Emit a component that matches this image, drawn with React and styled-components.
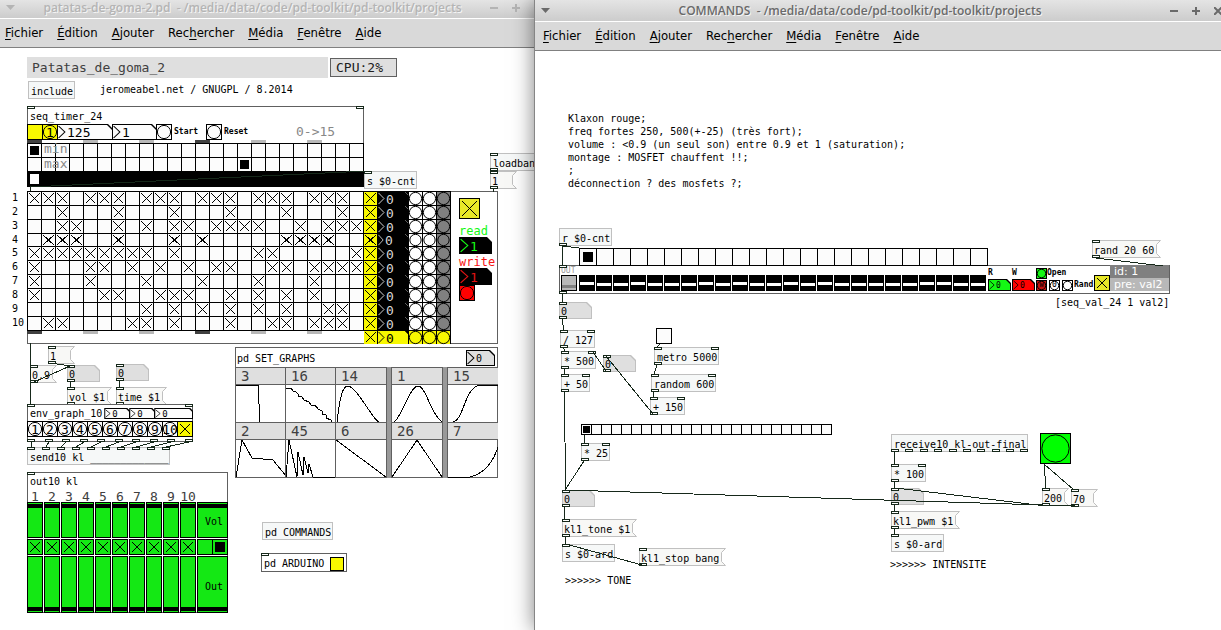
import React from 'react';
import styled, { createGlobalStyle } from 'styled-components'

const GlobalStyle = createGlobalStyle`
* { box-sizing: border-box; }
body {
    margin: 0;
    background: #ffffff;
    font-family: "DejaVu Sans Mono", monospace;
    font-size: 10px;
    line-height: 13px;
    color: #000000;
}
button, input {
    margin: 0;
    padding: 0;
    border: 0;
    border-radius: 0;
    font: inherit;
    color: inherit;
}
`

const Desktop = styled.main`
display: grid;
grid-template-columns: 534fr 687fr;
min-height: 100vh;
overflow: hidden;
`

const Window = styled.section`
position: relative;
min-width: 0;
background: #ffffff;
overflow: ${p => p.$front ? 'visible' : 'hidden'};
border-left: ${p => p.$front ? '1px solid #858585' : '0'};
box-shadow: ${p => p.$front ? '0 0 20px rgba(0, 0, 0, 0.5)' : 'none'};
`

const TitleBar = styled.header`
display: flex;
align-items: center;
height: ${p => p.$front ? 22 : 19}px;
padding-bottom: ${p => p.$front ? 0 : 3}px;
margin-right: ${p => p.$front ? 0 : -15}px;
background: linear-gradient(#e4e4e4, #cccccc);
border-bottom: 1px solid #ffffff;
color: ${p => p.$front ? '#6a6a6a' : '#b4b4b4'};
overflow: hidden;

h1 {
    flex: 1;
    margin: 0;
    text-align: center;
    white-space: pre;
    font: 600 12px/16px "Open Sans", sans-serif;
    text-shadow: 1px 1px 0 #f4f4f4;
}
`

const TitleButton = styled.button`
flex: 0 0 22px;
height: 16px;
background: none;

svg {
    display: block;
    margin: 0 auto;
}
`

const TitleButtons = styled.div`
display: flex;
margin-right: ${p => p.$front ? -8 : 0}px;
`

const MenuBar = styled.nav`
display: flex;
align-items: center;
gap: 14px;
height: 29px;
padding: 0 ${p => p.$front ? 8 : 5}px;
background: #d9d9d9;
border-bottom: 1px solid #808080;

a {
    color: #000000;
    text-decoration: none;
    font: 13px/20px "DejaVu Sans Condensed", "DejaVu Sans", sans-serif;
}

u {
    text-underline-offset: 2px;
}
`

const Node = styled.div`
position: absolute;
left: ${p => p.$x}px;
top: ${p => p.$y}px;
white-space: pre;
`

const Box = styled(Node)`
height: 18px;
padding: 4px 2px 0 3px;
background: #f6f8f8;
box-shadow: inset 0 0 0 1px #c0c0c0;
`

const MessageBox = styled(Node)`
display: flex;
height: 18px;
min-width: 27px;

button {
    flex: 1;
    height: 18px;
    padding: 3px 1px 0;
    text-align: left;
    white-space: pre;
    background: #f8f8f6;
    border: 1px solid #c0c0c0;
    border-right: 0;
}
`

const Comment = styled(Node)`
margin: 0;
font-family: inherit;
`

const Ports = styled.span`
position: absolute;
left: 0;
right: 0;
${p => p.$side}: 0;
display: flex;
justify-content: space-between;
pointer-events: none;

i {
    width: 8px;
    height: 3px;
    background: #ffffff;
    border: 1px solid #16281a;
}
`

const Cords = styled.svg`
position: absolute;
inset: 0;
width: 100%;
height: 100%;
pointer-events: none;
shape-rendering: crispEdges;
stroke: #16281a;
fill: none;
`

const Panel = styled(Node)`
width: ${p => p.$w}px;
background: #ffffff;
box-shadow: inset 0 0 0 1px #606060;
`

const PanelTitle = styled.div`
display: flex;
align-items: center;
height: ${p => p.$h}px;
padding: 2px ${p => p.$end || 0}px 0 ${p => p.$start || 3}px;
`

const Banner = styled(Node)`
width: 301px;
height: 21px;
padding-left: 5px;
background: #dfdfdf;
color: #404040;
font-size: 13px;
line-height: 21px;
`

const Cpu = styled(Node)`
width: 67px;
height: 19px;
padding-left: 5px;
background: #dfdfdf;
border: 1px solid #606060;
color: #202020;
font-size: 13px;
line-height: 18px;
`

const BigLabel = styled.span`
font-size: 13px;
line-height: 14px;
color: ${p => p.$color || '#888888'};
`

const Tiny = styled.span`
font-size: 8px;
font-weight: bold;
line-height: 10px;
`

const Row = styled.div`
display: flex;
align-items: center;
height: ${p => p.$h}px;
`

const Joined = styled.div`
display: flex;
margin-left: ${p => p.$left || 0}px;

& > * + * {
    margin-left: -1px;
}
`

const ToggleBox = styled.label`
display: grid;
grid-template: 100% / 100%;
flex: none;
width: ${p => p.$size}px;
height: ${p => p.$size ? p.$size + 'px' : '100%'};
background: ${p => p.$bg || '#fcfcfc'};
border: ${p => p.$plain ? '0' : '1px solid #000000'};

input, svg {
    grid-area: 1 / 1;
    width: 100%;
    height: 100%;
    min-height: 0;
    appearance: none;
}

svg {
    display: none;
    pointer-events: none;
    stroke: #000000;
    shape-rendering: crispEdges;
}

path {
    vector-effect: non-scaling-stroke;
}

input:checked + svg {
    display: block;
}
`

const BangButton = styled.button`
display: grid;
grid-template: 100% / 100%;
flex: none;
width: ${p => p.$size}px;
height: ${p => p.$size ? p.$size + 'px' : '100%'};
background: ${p => p.$bg || '#fcfcfc'};
border: ${p => p.$plain ? '0' : '1px solid #000000'};
color: ${p => p.$ink || '#000000'};
font-size: ${p => p.$font || 13}px;
line-height: 1;
place-items: center;

svg, span {
    grid-area: 1 / 1;
}

svg {
    width: 100%;
    height: 100%;
    min-height: 0;
    overflow: visible;
}

circle {
    vector-effect: non-scaling-stroke;
}

span {
    width: 0;
    display: flex;
    justify-content: center;
}
`

const NumberFrame = styled.span`
display: block;
flex: none;
width: ${p => p.$w}px;
height: ${p => p.$h}px;
padding: ${p => p.$plain ? 0 : 1}px;
background: ${p => p.$line};
clip-path: polygon(0 0, calc(100% - ${p => p.$cut}px) 0, 100% ${p => p.$cut}px, 100% 100%, 0 100%);
`

const NumberFace = styled.label`
display: flex;
align-items: center;
height: 100%;
background: ${p => p.$bg};
color: ${p => p.$ink};
clip-path: polygon(0 0, calc(100% - ${p => p.$cut}px) 0, 100% ${p => p.$cut}px, 100% 100%, 0 100%);

svg {
    flex: none;
    height: 100%;
    stroke: currentColor;
    fill: none;
}

input {
    width: 100%;
    min-width: 0;
    height: 100%;
    padding: 1px 0 0 1px;
    background: transparent;
    font-size: ${p => p.$font}px;
}
`

const RadioStrip = styled.div`
display: grid;
grid-template-columns: repeat(${p => p.$count}, ${p => p.$cell}px);
gap: 1px;
width: max-content;
padding: 1px;
background: #000000;

& + & {
    margin-top: -1px;
}

input {
    appearance: none;
    height: ${p => p.$high || p.$cell}px;
    background: ${p => p.$bg || '#fcfcfc'};
}

input:checked {
    background: ${p => p.$mark || '#000000'};
    box-shadow: inset 0 0 0 ${p => p.$inset}px ${p => p.$bg || '#fcfcfc'};
}
`

const RangeFrame = styled.label`
position: relative;
display: block;
height: ${p => p.$h}px;
padding: 1px;
background: ${p => p.$bg};
border: 1px solid #000000;

input {
    display: block;
    appearance: none;
    writing-mode: vertical-lr;
    direction: rtl;
    width: 100%;
    height: 100%;
    background: transparent;
}

input::-webkit-slider-thumb {
    appearance: none;
    width: ${p => p.$thumbWidth}px;
    height: ${p => p.$thumbHeight}px;
    background: ${p => p.$thumb};
}

span {
    position: absolute;
    right: 4px;
    top: 50%;
    margin-top: -3px;
    line-height: 10px;
}
`

const MarkRow = styled.div`
display: grid;
grid-template-columns: repeat(6, 15px);
column-gap: 41px;
height: 3px;

i { background: #b8b8b8; }
i:nth-child(3n + 1) { background: #404040; }
`

const Over = styled.span`
position: absolute;
left: 17px;
top: ${p => p.$top}px;
line-height: 14px;
pointer-events: none;
`

const RowNumbers = styled(Node)`
display: grid;
grid-template-rows: repeat(3, 14px) 13px repeat(6, 14px);
line-height: 14px;
`

const SeqBody = styled.div`
display: flex;
height: 153px;
`

const Matrix = styled.div`
display: grid;
grid-template-columns: repeat(24, 13px);
grid-template-rows: repeat(3, 13px) 12px repeat(6, 13px);
gap: 1px;
padding: 1px;
background: #000000;
`

const TrackControls = styled.div`
display: grid;
grid-template-columns: 13px 30px repeat(3, 13px);
grid-template-rows: repeat(3, 13px) 12px repeat(7, 13px);
gap: 1px;
padding: 1px 1px 1px 0;
background: #000000;
`

const MemoryColumn = styled.div`
display: flex;
flex-direction: column;
align-items: flex-start;
padding: 7px 0 0 8px;
`

const MemoryLabel = styled.span`
height: 12px;
margin-top: ${p => p.$top}px;
color: ${p => p.$color};
font-size: 12px;
line-height: 12px;
`

const GraphGrid = styled.div`
display: grid;
grid-template-columns: 50px 50px 51px 5px 51px 5px 51px;
grid-template-rows: 55px 56px;
`

const GraphCell = styled.figure`
margin: 0;
border-left: 1px solid #606060;
border-top: 1px solid #606060;

figcaption {
    height: 17px;
    padding-left: 5px;
    background: #dfdfdf;
    border-bottom: 1px solid #606060;
    color: #404040;
    font-size: 14px;
    line-height: 17px;
}

svg {
    display: block;
    width: 100%;
    height: 37px;
    overflow: visible;
    fill: none;
    stroke: #000000;
    shape-rendering: crispEdges;
}
`

const GraphBar = styled.i`
background: #999999;
border-left: 1px solid #606060;
`

const MixerNumbers = styled.div`
display: grid;
grid-template-columns: repeat(10, 17px);
height: 13px;
color: #404040;
font-size: 13px;
line-height: 15px;

span {
    display: flex;
    justify-content: center;
    width: 16px;
}
`

const MixerGrid = styled.div`
display: grid;
grid-template-columns: repeat(10, 16px) 31px;
gap: 1px;
`

const ValuePanel = styled(Panel)`
display: flex;
align-items: flex-end;
height: 29px;
padding: 0 1px 3px 2px;
`

const Stack = styled.div`
display: flex;
flex: none;
flex-direction: column;
justify-content: space-between;
width: ${p => p.$w}px;
height: ${p => p.$h}px;
margin-right: ${p => p.$gap || 0}px;
margin-left: ${p => p.$left || 0}px;
`

const ValueSliders = styled.div`
display: grid;
grid-template-columns: repeat(24, 16px);
gap: 1px;
margin-right: 2px;
`

const Tag = styled.span`
padding-left: 4px;
height: 13px;
background: ${p => p.$bg};
color: #ffffff;
font: 11px/13px "DejaVu Sans", sans-serif;
`

const OutLabel = styled.span`
color: #999999;
font-size: 8px;
line-height: 8px;
`

const GREEN = '#14e814'
const YELLOW = '#f8f800'

const TRACKS = [
    [0, 1, 2, 4, 5, 6, 8, 9, 10, 12, 13, 14, 16, 17, 18, 20, 21, 22],
    [2, 6, 10, 14, 18, 22],
    [2, 3, 6, 8, 10, 11, 13, 14, 15, 16, 19, 21, 22, 23],
    [1, 2, 3, 6, 10, 12, 18, 19, 20, 21],
    [0, 1, 2, 3, 4, 5, 6, 7, 8, 10, 16, 17, 23],
    [0, 4, 5, 7, 9, 11, 13, 14, 17, 18, 20, 21, 22, 23],
    [0, 4, 8, 12, 16, 20],
    [0, 5, 6, 9, 10, 11, 14, 16, 18, 20],
    [8, 10, 12, 14, 16, 18, 21, 22],
    [1, 2, 7, 8, 10, 14, 17, 18, 20, 21, 22],
]

const GRAPHS = [
    [3, 'M0 0H22L24 37'],
    [16, 'M0 3H5L7 6L10 7L12 9V11L16 12L18 15L23 17L25 20H29L32 24L36 26V29L40 30V33L45 35V37'],
    [14, 'M1 37C4 10 7 1 12 1C16 1 20 7 24 12L37 31Q41 36 43 37H50'],
    null,
    [1, 'M2 37C10 32 18 1 26 1C34 1 39 30 50 37'],
    null,
    [15, 'M5 37C16 35 16 3 32 0H50'],
    [2, 'M0 37L6 0L16 18L37 20L50 36'],
    [45, 'M0 37L3 0L11 37L12 12L17 35L18 17L22 33L23 24L27 37H50'],
    [6, 'M0 0L50 37'],
    null,
    [26, 'M0 37L25 0L50 37'],
    null,
    [7, 'M0 37H22Q42 32 50 7'],
]

const LEVELS = [47, 38, 29, 47, 38, 38, 38, 47, 29, 47, 29, 38, 47, 38, 47, 29, 29, 29, 38, 29, 47, 47, 29, 29]

const range = n => Array.from({ length: n }, (_, i) => i)

function PortRow({ side, count }) {
    if (!count) return null
    return <Ports $side={side}>{range(count).map(i => <i key={i} />)}</Ports>
}

function Obj({ x, y, ins = 0, outs = 0, children }) {
    return (
        <Box $x={x} $y={y}>
            {children}
            <PortRow side="top" count={ins} />
            <PortRow side="bottom" count={outs} />
        </Box>
    )
}

function Message({ x, y, children }) {
    return (
        <MessageBox $x={x} $y={y}>
            <button>{children}</button>
            <svg width="6" height="18" fill="#f8f8f6" stroke="#c0c0c0">
                <path d="M0 0.5H5.5L1.5 4.5V13.5L5.5 17.5H0" />
            </svg>
            <PortRow side="top" count={1} />
            <PortRow side="bottom" count={1} />
        </MessageBox>
    )
}

function NumBox({ label, value = '0', w, h, bg = '#fcfcfc', ink = '#000000', line = '#000000', font = 13, cut = 5, plain, arrow = true }) {
    return (
        <NumberFrame $w={w} $h={h} $line={line} $cut={cut} $plain={plain}>
            <NumberFace $bg={bg} $ink={ink} $font={font} $cut={cut}>
                {arrow && (
                    <svg width={Math.round(h / 2)} viewBox="0 0 7 14" preserveAspectRatio="none">
                        <path d="M0.5 1L6 7L0.5 13" />
                    </svg>
                )}
                <input aria-label={label} defaultValue={value} />
            </NumberFace>
        </NumberFrame>
    )
}

function Atom({ x, y }) {
    return (
        <Node $x={x} $y={y}>
            <NumBox label="number" w={33} h={17} bg="#dfdfdf" line="#c0c0c0" font={10} arrow={false} />
            <PortRow side="top" count={1} />
            <PortRow side="bottom" count={1} />
        </Node>
    )
}

function Toggle({ label, size, bg, on = true, plain }) {
    return (
        <ToggleBox $size={size} $bg={bg} $plain={plain}>
            <input type="checkbox" aria-label={label} defaultChecked={on} />
            <svg viewBox="0 0 13 13" preserveAspectRatio="none"><path d="M1.5 1.5L11.5 11.5M11.5 1.5L1.5 11.5" /></svg>
        </ToggleBox>
    )
}

function Bang({ label, text, size, bg, fill = 'none', ring = '#000000', plain, ink, font }) {
    return (
        <BangButton aria-label={label} $size={size} $bg={bg} $plain={plain} $ink={ink} $font={font}>
            <svg viewBox="0 0 14 14"><circle cx="7" cy="7" r="6.6" fill={fill} stroke={ring} /></svg>
            {text && <span>{text}</span>}
        </BangButton>
    )
}

function Radio({ name, count, cell, high, value = 0, inset, bg, mark }) {
    return (
        <RadioStrip role="radiogroup" aria-label={name} $count={count} $cell={cell} $high={high} $inset={inset} $bg={bg} $mark={mark}>
            {range(count).map(i => (
                <input key={i} type="radio" name={name} aria-label={`${name} ${i}`} defaultChecked={i === value} />
            ))}
        </RadioStrip>
    )
}

function Slider({ label, text, value, h, bg = GREEN, thumb = '#000000', thumbWidth = 14, thumbHeight = 4 }) {
    return (
        <RangeFrame $h={h} $bg={bg} $thumb={thumb} $thumbWidth={thumbWidth} $thumbHeight={thumbHeight}>
            <input type="range" aria-label={label} defaultValue={value} />
            {text && <span>{text}</span>}
        </RangeFrame>
    )
}

function Marks() {
    return <MarkRow>{range(6).map(i => <i key={i} />)}</MarkRow>
}

function WindowChrome({ title, front }) {
    return (
        <>
            <TitleBar $front={front}>
                <TitleButton aria-label="Menu">
                    <svg width="10" height="6" fill="currentColor"><path d="M0 0H9L4.5 5Z" /></svg>
                </TitleButton>
                <h1>{title}</h1>
                <TitleButtons $front={front}>
                    <TitleButton aria-label="Minimize">
                        <svg width="8" height="8" stroke="currentColor" strokeWidth="2"><path d="M0 4H8" /></svg>
                    </TitleButton>
                    <TitleButton aria-label="Maximize">
                        <svg width="8" height="8" stroke="currentColor" strokeWidth="2"><path d="M0 4H8M4 0V8" /></svg>
                    </TitleButton>
                    <TitleButton aria-label="Close">
                        <svg width="8" height="8" stroke="currentColor" strokeWidth="2"><path d="M0 0L8 8M8 0L0 8" /></svg>
                    </TitleButton>
                </TitleButtons>
            </TitleBar>
            <MenuBar $front={front}>
                <a href="#fichier"><u>F</u>ichier</a>
                <a href="#edition"><u>É</u>dition</a>
                <a href="#ajouter"><u>A</u>jouter</a>
                <a href="#rechercher">Rec<u>h</u>ercher</a>
                <a href="#media"><u>M</u>édia</a>
                <a href="#fenetre"><u>F</u>enêtre</a>
                <a href="#aide"><u>A</u>ide</a>
            </MenuBar>
        </>
    )
}

function SeqTimer() {
    return (
        <Panel $x={27} $y={106} $w={337}>
            <PanelTitle $h={18}>seq_timer_24</PanelTitle>
            <Row $h={16}>
                <Joined>
                    <Toggle label="run" size={16} bg={YELLOW} on={false} />
                    <Bang label="step" text="1" size={16} bg={YELLOW} />
                    <NumBox label="tempo" value="125" w={56} h={16} />
                    <NumBox label="division" value="1" w={45} h={16} />
                    <Bang label="Start" size={16} />
                </Joined>
                <Stack $w={32} $h={10} $left={2}><Tiny>Start</Tiny></Stack>
                <Bang label="Reset" size={16} />
                <Stack $w={72} $h={10} $left={2}><Tiny>Reset</Tiny></Stack>
                <BigLabel>0-&gt;15</BigLabel>
            </Row>
            <Marks />
            <Radio name="min" count={24} cell={13} inset={2} />
            <Radio name="max" count={24} cell={13} inset={2} value={15} />
            <Radio name="position" count={24} cell={13} high={14} inset={2} bg="#000000" mark="#ffffff" />
            <Over $top={36}><BigLabel>min</BigLabel></Over>
            <Over $top={51}><BigLabel>max</BigLabel></Over>
            <PortRow side="top" count={2} />
        </Panel>
    )
}

function Sequencer() {
    return (
        <Panel $x={27} $y={191} $w={471}>
            <SeqBody>
                <div>
                    <Matrix>
                        {TRACKS.map((steps, r) => range(24).map(c => (
                            <Toggle key={`${r}-${c}`} label={`track ${r + 1} step ${c + 1}`} on={steps.includes(c)} plain />
                        )))}
                    </Matrix>
                    <Marks />
                </div>
                <TrackControls>
                    {range(11).map(r => (
                        <React.Fragment key={r}>
                            <Toggle label={`track ${r + 1}`} bg={YELLOW} plain />
                            <NumBox label={`value ${r + 1}`} w={30} h={r === 3 ? 12 : 13} plain
                                bg={r === 10 ? YELLOW : '#000000'} ink={r === 10 ? '#000000' : '#d8d8d8'} line={r === 10 ? '#000000' : '#ffffff'} cut={3} />
                            {['#ffffff', '#ffffff', '#808080'].map((fill, i) => (
                                <Bang key={i} label={`bang ${r + 1}.${i + 1}`} bg={r === 10 ? YELLOW : fill} fill={r === 10 ? YELLOW : fill} plain />
                            ))}
                        </React.Fragment>
                    ))}
                </TrackControls>
                <MemoryColumn>
                    <Toggle label="memory" size={21} bg="#e8e828" />
                    <MemoryLabel $color="#14f814" $top={6}>read</MemoryLabel>
                    <NumBox label="read" value="1" w={33} h={17} bg="#000000" ink="#14f814" />
                    <MemoryLabel $color="#f81414" $top={2}>write</MemoryLabel>
                    <NumBox label="write" value="1" w={33} h={17} bg="#000000" ink="#e01414" />
                    <Bang label="write memory" size={16} bg="#ff0000" fill="#ff0000" />
                </MemoryColumn>
            </SeqBody>
        </Panel>
    )
}

function EnvGraph() {
    return (
        <Panel $x={27} $y={404} $w={166}>
            <PanelTitle $h={17}>
                env_graph_10
                <Joined $left={2}>
                    <NumBox label="graph" w={26} h={11} font={9} cut={3} />
                    <NumBox label="attack" w={26} h={11} font={9} cut={3} />
                    <NumBox label="length" w={39} h={11} font={9} cut={3} />
                </Joined>
            </PanelTitle>
            <Joined>
                {range(10).map(i => <Bang key={i} label={`envelope ${i + 1}`} text={String(i + 1)} size={16} />)}
                <Toggle label="envelope" size={16} bg={YELLOW} />
            </Joined>
            <Row $h={5} />
            <PortRow side="top" count={2} />
            <PortRow side="bottom" count={10} />
        </Panel>
    )
}

function SetGraphs() {
    return (
        <Panel $x={235} $y={347} $w={263}>
            <PanelTitle $h={20} $start={2} $end={3}>
                <Stack $w={229} $h={13}>pd SET_GRAPHS</Stack>
                <NumBox label="graph set" w={29} h={16} bg="#dfdfdf" font={10} />
            </PanelTitle>
            <GraphGrid>
                {GRAPHS.map((g, i) => g
                    ? <GraphCell key={i}><figcaption>{g[0]}</figcaption><svg><path d={g[1]} /></svg></GraphCell>
                    : <GraphBar key={i} />)}
            </GraphGrid>
        </Panel>
    )
}

function Mixer() {
    return (
        <Panel $x={27} $y={472} $w={201}>
            <PanelTitle $h={17}>out10 kl</PanelTitle>
            <MixerNumbers>{range(10).map(i => <span key={i}>{i + 1}</span>)}</MixerNumbers>
            <MixerGrid>
                {range(10).map(i => <Slider key={i} label={`Vol ${i + 1}`} value={100} h={36} />)}
                <Slider label="Vol" text="Vol" value={100} h={36} thumbWidth={29} />
                {range(10).map(i => <Toggle key={i} label={`mute ${i + 1}`} size={16} bg={GREEN} />)}
                <Radio name="mode" count={2} cell={14} value={1} inset={2} bg={GREEN} />
                {range(10).map(i => <Slider key={i} label={`Out ${i + 1}`} value={0} h={57} />)}
                <Slider label="Out" text="Out" value={0} h={57} thumbWidth={29} />
            </MixerGrid>
            <PortRow side="top" count={1} />
        </Panel>
    )
}

function SeqValues() {
    return (
        <ValuePanel $x={24} $y={265} $w={611}>
            <Stack $w={16} $h={24} $gap={2}>
                <OutLabel>OUT</OutLabel>
                <Slider label="OUT" value={10} h={16} bg="#b8b8b8" thumb="#808080" thumbHeight={3} />
            </Stack>
            <ValueSliders>
                {LEVELS.map((v, i) => <Slider key={i} label={`value ${i + 1}`} value={v} h={16} bg="#000000" thumb="#ffffff" thumbHeight={3} />)}
            </ValueSliders>
            <Stack $w={23} $h={23} $gap={1}><Tiny>R</Tiny><NumBox label="R" w={23} h={12} bg="#14f814" font={8} cut={4} /></Stack>
            <Stack $w={23} $h={23} $gap={1}><Tiny>W</Tiny><NumBox label="W" w={23} h={12} bg="#ff0000" font={8} cut={4} /></Stack>
            <Stack $w={58} $h={24}>
                <Row $h={12}><Bang label="Open" size={11} bg="#14f814" fill="#14f814" /><Tiny>Open</Tiny></Row>
                <Row $h={12}>
                    <Bang label="W" text="W" size={11} bg="#c01010" fill="#c01010" font={7} />
                    <Stack $w={2} $h={1} />
                    <Bang label="0" text="0" size={11} bg="#ffffff" fill="#ffffff" font={8} />
                    <Stack $w={2} $h={1} />
                    <Bang label="Rand" size={11} bg="#ffffff" fill="#ffffff" />
                    <Stack $w={1} $h={1} />
                    <Tiny>Rand</Tiny>
                </Row>
            </Stack>
            <Toggle label="random" size={16} bg="#e8e828" />
            <Stack $w={59} $h={26}><Tag $bg="#808080">id: 1</Tag><Tag $bg="#b8b8b8">pre: val2</Tag></Stack>
            <PortRow side="top" count={1} />
            <PortRow side="bottom" count={1} />
        </ValuePanel>
    )
}

function PatatasWindow() {
    return (
        <Window>
            <WindowChrome title="patatas-de-goma-2.pd  - /media/data/code/pd-toolkit/pd-toolkit/projects" />
            <Banner $x={27} $y={57}>Patatas_de_goma_2</Banner>
            <Cpu $x={330} $y={58}>CPU:2%</Cpu>
            <Obj x={28} y={81}>include</Obj>
            <Comment as="p" $x={100} $y={83}>jeromeabel.net / GNUGPL / 8.2014</Comment>
            <SeqTimer />
            <Obj x={364} y={171} ins={1}>s $0-cnt</Obj>
            <Obj x={490} y={153} ins={1} outs={1}>loadbang</Obj>
            <Message x={490} y={171}>1</Message>
            <RowNumbers $x={12} $y={191}>{range(10).map(i => <span key={i}>{i + 1}</span>)}</RowNumbers>
            <Sequencer />
            <Message x={48} y={346}>1</Message>
            <Message x={30} y={365}>0.9</Message>
            <Atom x={67} y={365} />
            <Atom x={116} y={364} />
            <Message x={67} y={387}>vol $1</Message>
            <Message x={116} y={387}>time $1</Message>
            <EnvGraph />
            <Obj x={27} y={447} ins={10}>send10 kl _____________</Obj>
            <SetGraphs />
            <Mixer />
            <Obj x={262} y={522}>pd COMMANDS</Obj>
            <Panel $x={261} $y={553} $w={86}>
                <PanelTitle $h={19}>
                    <Stack $w={66} $h={13}>pd ARDUINO</Stack>
                    <Toggle label="arduino" size={14} bg={YELLOW} on={false} />
                </PanelTitle>
                <PortRow side="top" count={1} />
            </Panel>
            <Cords>
                <path d="M30.5 187V191M30.5 343V404M50.5 363L70 366M34 382L70 366M70.5 382V387M119.5 381V387M493.5 170V172M493.5 188V192" />
                <path d="M30 187L367 171" />
                {range(10).map(i => <path key={i} d={`M${31 + Math.round(17.5 * i)} 442L${31 + 15 * i} 447`} />)}
            </Cords>
        </Window>
    )
}

function CommandsWindow() {
    return (
        <Window $front>
            <WindowChrome front title="COMMANDS  - /media/data/code/pd-toolkit/pd-toolkit/projects" />
            <Comment as="p" $x={33} $y={112}>
                {'Klaxon rouge;\nfreq fortes 250, 500(+-25) (très fort);\nvolume : <0.9 (un seul son) entre 0.9 et 1 (saturation);\nmontage : MOSFET chauffent !!;\n;\ndéconnection ? des mosfets ?;'}
            </Comment>
            <Obj x={24} y={228} outs={1}>r $0-cnt</Obj>
            <SeqValues />
            <Node $x={44} $y={248}><Radio name="count" count={24} cell={16} inset={3} /></Node>
            <Message x={557} y={240}>rand 20 60</Message>
            <Comment as="p" $x={520} $y={296}>[seq_val_24 1 val2]</Comment>
            <Atom x={24} y={302} />
            <Obj x={25} y={330} ins={2} outs={1}>/ 127</Obj>
            <Obj x={26} y={351} ins={2} outs={1}>* 500</Obj>
            <Atom x={68} y={355} />
            <Obj x={26} y={374} ins={2} outs={1}>+ 50</Obj>
            <Node $x={121} $y={328}><Toggle label="metro" size={16} on={false} /></Node>
            <Obj x={119} y={347} ins={2} outs={1}>metro 5000</Obj>
            <Obj x={116} y={374} ins={2} outs={1}>random 600</Obj>
            <Obj x={115} y={397} ins={2} outs={1}>+ 150</Obj>
            <Node $x={46} $y={424}><Radio name="multiple" count={25} cell={9} inset={1} /></Node>
            <Obj x={46} y={443} ins={2} outs={1}>* 25</Obj>
            <Atom x={27} y={490} />
            <Message x={27} y={519}>kl1_tone $1</Message>
            <Obj x={27} y={544} ins={1}>s $0-ard</Obj>
            <Message x={104} y={548}>kl1_stop bang</Message>
            <Comment as="p" $x={30} $y={574}>&gt;&gt;&gt;&gt;&gt;&gt; TONE</Comment>
            <Obj x={356} y={434} outs={10}>receive10 kl-out-final</Obj>
            <Obj x={356} y={464} ins={2} outs={1}>* 100</Obj>
            <Atom x={356} y={488} />
            <Message x={356} y={511}>kl1_pwm $1</Message>
            <Obj x={356} y={534} ins={1}>s $0-ard</Obj>
            <Node $x={505} $y={433}><Bang label="bang" size={31} bg="#00ff00" /></Node>
            <Message x={507} y={488}>200</Message>
            <Message x={536} y={489}>70</Message>
            <Comment as="p" $x={355} $y={558}>&gt;&gt;&gt;&gt;&gt;&gt; INTENSITE</Comment>
            <Cords>
                <path d="M27.5 246V266M27 246L44 248M27.5 294V302M27.5 319L28.5 330M28.5 347L29.5 351M29.5 369V374M29.5 392L30.5 490M29.5 507V519M30.5 537V544" />
                <path d="M71 371L58 352M118 414L71 356M125 344L122 347M122 365L119 374M119 392L118 397M49.5 435V443M49 461L30 490" />
                <path d="M31 490L540 506M31 544L107 565M561 258L628 266" />
                <path d="M359.5 452V464M359.5 482V488M359.5 505V511M359.5 529V534M361 488L511 506M509 464L511 488M509 464L539 490" />
            </Cords>
        </Window>
    )
}

function App() {
    return (
        <Desktop>
            <GlobalStyle />
            <PatatasWindow />
            <CommandsWindow />
        </Desktop>
    )
}

export default App;
